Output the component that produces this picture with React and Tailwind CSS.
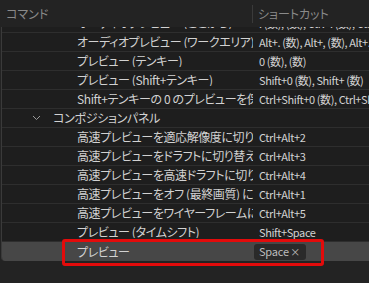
const rows = [
  { cmd: "オーディオプレビュー (ここから)", keys: ". (数), (数), Ctrl+. (数), Ctrl+" },
  { cmd: "オーディオプレビュー (ワークエリア)", keys: "Alt+. (数), Alt+, (数), Alt+. (数)" },
  { cmd: "プレビュー (テンキー)", keys: "0 (数), (数)" },
  { cmd: "プレビュー (Shift+テンキー)", keys: "Shift+0 (数), Shift+ (数)" },
  { cmd: "Shift+テンキーの 0 のプレビューを保存", keys: "Ctrl+Shift+0 (数), Ctrl+Shift+ (数)" },
  { section: "コンポジションパネル" },
  { cmd: "高速プレビューを適応解像度に切り替え", keys: "Ctrl+Alt+2" },
  { cmd: "高速プレビューをドラフトに切り替え", keys: "Ctrl+Alt+3" },
  { cmd: "高速プレビューを高速ドラフトに切り替え", keys: "Ctrl+Alt+4" },
  { cmd: "高速プレビューをオフ (最終画質) に切り替え", keys: "Ctrl+Alt+1" },
  { cmd: "高速プレビューをワイヤーフレームに切り替え", keys: "Ctrl+Alt+5" },
  { cmd: "プレビュー (タイムシフト)", keys: "Shift+Space" },
];

function Chevron() {
  return (
    <svg width="9" height="6" viewBox="0 0 9 6" className="text-[#9a9a9a]">
      <path d="M1 1 L4.5 4.5 L8 1" fill="none" stroke="currentColor" strokeWidth="1" />
    </svg>
  );
}

export default function App() {
  return (
    <div className="w-[369px] h-[283px] bg-[#232323] overflow-hidden relative font-['Noto_Sans_CJK_JP',sans-serif] [font-feature-settings:'palt'] text-[12px] leading-none">
      {/* header */}
      <div className="h-[27px] flex items-center text-[#8a8a8a]">
        <div className="w-[252px] shrink-0 pl-[6px]">コマンド</div>
        <div className="w-px h-[18px] shrink-0 bg-[#3a3a3a]" />
        <div className="pl-[5px] whitespace-nowrap">ショートカット</div>
      </div>

      {/* list */}
      <div className="ml-[1px] h-[234px] overflow-hidden border-l border-[#3a3a3a] rounded-bl-[4px] bg-[#1e1e1e]">
        <div className="-mt-[13px]">
          {rows.map((r, i) =>
            r.section ? (
              <div key={i} className="h-[19px] flex items-center border-b border-[#2e2e2e] text-[#d2d2d2]">
                <div className="w-[51px] shrink-0 flex justify-end pr-[12px]">
                  <Chevron />
                </div>
                <span className="whitespace-nowrap tracking-[-0.3px]">{r.section}</span>
              </div>
            ) : (
              <div key={i} className="h-[19px] flex items-center border-b border-[#2e2e2e] text-[#d2d2d2]">
                <div className="w-[251px] shrink-0 pl-[75px] overflow-hidden whitespace-nowrap tracking-[-0.4px]">{r.cmd}</div>
                <div className="pl-[6px] whitespace-nowrap text-[11px] tracking-[-0.4px]">{r.keys}</div>
              </div>
            )
          )}
          <div className="h-[19px] flex items-center bg-[#474747] text-[#d2d2d2]">
            <div className="w-[251px] shrink-0 pl-[75px] whitespace-nowrap tracking-[-0.4px]">プレビュー</div>
            <div className="h-[16px] w-[52px] shrink-0 ml-[1px] flex items-center justify-between pl-[5px] pr-[6px] bg-[#2a2a2a] rounded-[3px] text-[#bdbdbd] text-[11px] tracking-[-0.2px]">
              <span>Space</span>
              <span className="text-[10px]">×</span>
            </div>
          </div>
        </div>
      </div>

      {/* highlight box */}
      <div className="absolute left-[62px] top-[239px] w-[262px] h-[27px] border-[3px] border-[#e30b0b] rounded-[3px]" />
    </div>
  );
}
